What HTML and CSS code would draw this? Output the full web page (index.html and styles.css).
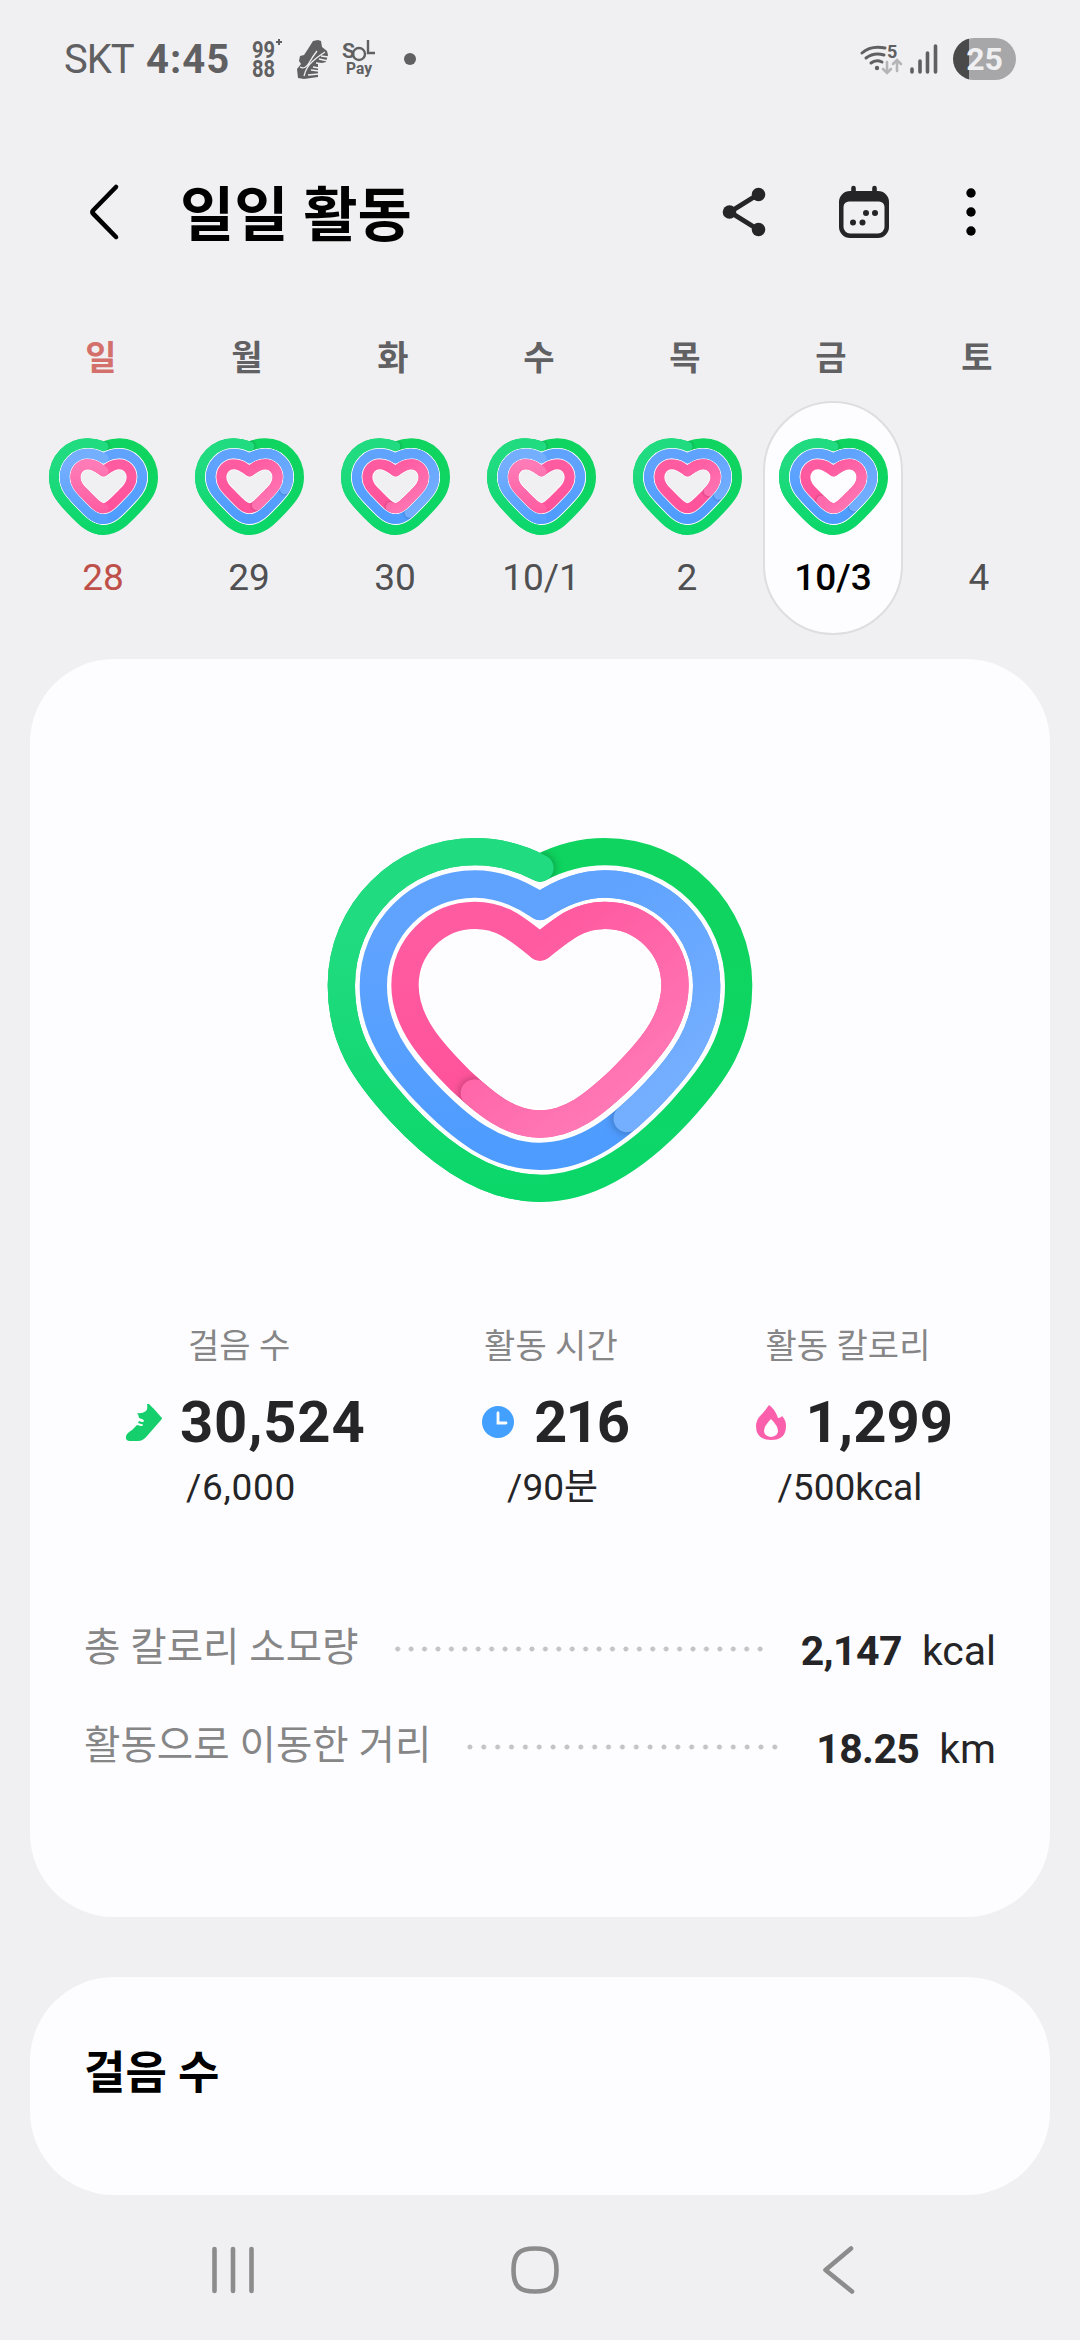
FILE: index.html
```html
<!DOCTYPE html>
<html lang="ko">
<head>
    <meta charset="UTF-8">
    <meta name="viewport" content="width=device-width, initial-scale=1.0">
    <title>일일 활동</title>
    <link rel="stylesheet" href="styles.css">
</head>
<body>
    <div class="status-bar">
        <span class="carrier">SKT</span>
        <span class="clock">4:45</span>
        <svg class="notif-9988" width="32" height="42" viewBox="0 0 32 42">
            <text x="0" y="20" textLength="23" lengthAdjust="spacingAndGlyphs">99</text>
            <text x="0" y="39" textLength="23" lengthAdjust="spacingAndGlyphs">88</text>
            <path d="M27 1v6M24 4h6" />
        </svg>
        <svg class="notif-shoe" width="32" height="40" viewBox="0 0 32 40">
            <path class="fill" d="M16 2l5-1 3 1 1 6 5 4 1 4-2 7-8 2v13l-14 2-6-1-1-9 4-5-2-3 1-5 4-1 4-6z" />
            <path class="cut" d="M7 37q2-9 9-15t12-9M3 28q5 3 9-4t8-12" />
            <path class="lines" d="M11 36l11-1M14 31l8 1M16 28l6 1M19 24l8 1M22 20l9 2M24 17l7 1" />
        </svg>
        <svg class="notif-sol" width="36" height="40" viewBox="0 0 36 40">
            <text class="sol" x="0" y="19">S</text>
            <circle cx="17" cy="15" r="6" />
            <path d="M26 1v13h7" />
            <text class="pay" x="4" y="35" textLength="26" lengthAdjust="spacingAndGlyphs">Pay</text>
        </svg>
        <span class="notif-more"></span>
        <div class="status-right">
            <svg class="wifi" width="42" height="32" viewBox="0 0 42 32">
                <path d="M2 10q9-8 23-5M6 15q8-6 18-3M11 20q5-4 11-1" />
                <circle cx="17" cy="25" r="2.2" />
                <text x="27" y="15">5</text>
                <path class="arrows" d="M27 19v10M23 26l4 4 4-4M37 28V18M33 21l4-4 4 4" />
            </svg>
            <svg class="signal" width="28" height="30" viewBox="0 0 28 30">
                <path d="M2 25v3M10 17v11M17.500 9v19M25.500 2v26" />
            </svg>
            <div class="battery">25</div>
        </div>
    </div>

    <header class="app-bar">
        <svg class="back" width="32" height="58" viewBox="0 0 32 58">
            <path d="M28 4L5.500 27q-2 2 0 4L28 54" />
        </svg>
        <h1 class="title">일일 활동</h1>
        <svg class="share" width="44" height="50" viewBox="0 0 44 50">
            <path d="M36 7.500L8 25l28 17.500" />
            <circle cx="36.500" cy="7.500" r="6.800" />
            <circle cx="7.500" cy="25" r="6.800" />
            <circle cx="36.500" cy="42.500" r="6.800" />
        </svg>
        <svg class="calendar" width="50" height="54" viewBox="0 0 50 54">
            <path class="pins" d="M14.500 3v7M35.500 3v7" />
            <path fill-rule="evenodd" d="M11 6h28a11 11 0 0 1 11 11v25a11 11 0 0 1-11 11H11A11 11 0 0 1 0 42V17A11 11 0 0 1 11 6zM10 16.500a5.500 5.500 0 0 0-5.500 5.500v20a6.500 6.500 0 0 0 6.500 6.500h28a6.500 6.500 0 0 0 6.500-6.500V22a5.500 5.500 0 0 0-5.500-5.500z" />
            <circle cx="27" cy="28" r="3" />
            <circle cx="36" cy="28" r="3" />
            <circle cx="14" cy="37.500" r="3" />
            <circle cx="23.500" cy="37.500" r="3" />
        </svg>
        <svg class="more" width="10" height="48" viewBox="0 0 10 48">
            <circle cx="5" cy="5" r="4.700" />
            <circle cx="5" cy="24" r="4.700" />
            <circle cx="5" cy="43" r="4.700" />
        </svg>
    </header>

    <div class="weekdays">
        <span class="sunday">일</span>
        <span>월</span>
        <span>화</span>
        <span>수</span>
        <span>목</span>
        <span>금</span>
        <span>토</span>
    </div>

    <!-- data-rings: where each ring ends (steps, time, calories), % of the last lap -->
    <div class="days">
        <div class="day sunday">
            <svg class="heart" data-size="small" data-rings="100,100,100"></svg>
            <span>28</span>
        </div>
        <div class="day">
            <svg class="heart" data-size="small" data-rings="100,29,45"></svg>
            <span>29</span>
        </div>
        <div class="day">
            <svg class="heart" data-size="small" data-rings="100,43,53"></svg>
            <span>30</span>
        </div>
        <div class="day">
            <svg class="heart" data-size="small" data-rings="100,100,100"></svg>
            <span>10/1</span>
        </div>
        <div class="day">
            <svg class="heart" data-size="small" data-rings="100,32,33"></svg>
            <span>2</span>
        </div>
        <div class="day selected">
            <svg class="heart" data-size="small" data-rings="100,39,59"></svg>
            <span>10/3</span>
        </div>
        <div class="day">
            <div class="heart"></div>
            <span>4</span>
        </div>
    </div>

    <main>
        <section class="card summary">
            <svg class="heart-big" data-size="big" data-rings="100,40,59.5"></svg>

            <div class="stats">
                <div class="stat steps">
                    <div class="stat-label">걸음 수</div>
                    <div class="stat-value">
                        <svg width="38" height="38" viewBox="0 0 38 38">
                            <path fill="#15cf6c" d="M24 1l5 5 7 8q2 1 0 3L22 33q-4 5-9 5H5q-5 0-4-5 1-3 6-6l5-5 4 1q2 0 2-1t-2-1l-3-1 1-2 3 1q2 0 2-1t-2-2l-3-1q0-3-2-5 5 1 9-2 2-2 1-7z" />
                        </svg>
                        <span>30,524</span>
                    </div>
                    <div class="stat-goal">/6,000</div>
                </div>
                <div class="stat time">
                    <div class="stat-label">활동 시간</div>
                    <div class="stat-value">
                        <svg width="32" height="32" viewBox="0 0 32 32">
                            <circle cx="16" cy="16" r="16" fill="#43a0ff" />
                            <path d="M16 7v10h8" fill="none" stroke="#fff" stroke-width="2.800" stroke-linecap="round" />
                        </svg>
                        <span>216</span>
                    </div>
                    <div class="stat-goal">/90분</div>
                </div>
                <div class="stat calories">
                    <div class="stat-label">활동 칼로리</div>
                    <div class="stat-value">
                        <svg width="30" height="35" viewBox="0 0 30 35">
                            <path fill="#fb5fab" d="M13 0q6 4 9 13 3 0 4-2 4 4 4 10 0 14-15 14T0 21Q0 15 5 10 9 6 13 0z" />
                            <path fill="#fdfdff" d="M15 14q7 7 7 12t-7 6q-7-1-7-6t7-12z" />
                        </svg>
                        <span>1,299</span>
                    </div>
                    <div class="stat-goal">/500kcal</div>
                </div>
            </div>

            <div class="totals">
                <div class="total">
                    <span class="total-label">총 칼로리 소모량</span>
                    <span class="leader"></span>
                    <span class="total-value">2,147</span>
                    <span class="unit">kcal</span>
                </div>
                <div class="total">
                    <span class="total-label">활동으로 이동한 거리</span>
                    <span class="leader"></span>
                    <span class="total-value">18.25</span>
                    <span class="unit">km</span>
                </div>
            </div>
        </section>

        <section class="card next">
            <h2>걸음 수</h2>
        </section>
    </main>

    <nav class="nav-bar">
        <svg width="44" height="48" viewBox="0 0 44 48">
            <path d="M3.500 3v42M22 3v42M40.500 3v42" />
        </svg>
        <svg class="home" width="50" height="50" viewBox="0 0 50 50">
            <path d="M25 3.500C41 3.500 46.500 9 46.500 25S41 46.500 25 46.500 3.500 41 3.500 25 9 3.500 25 3.500z" />
        </svg>
        <svg width="34" height="50" viewBox="0 0 34 50">
            <path d="M30 3.500L4.500 25 31 46.500" />
        </svg>
    </nav>

    <script>
        // Heart outlines, clockwise from the notch: steps, time, calories
        const shapes = {
            big: {
                viewBox: '60 60 1320 1140',
                stroke: 82,
                mid: 720,
                blur: 14,
                paths: [
                    'M720 174C785 140 850 125 915 125C1136 125 1316 305 1316 526C1316 690 1245 790 1140 905C1020 1035 880 1135 720 1135C560 1135 420 1035 300 905C195 790 124 690 124 526C124 305 304 125 525 125C590 125 655 140 720 174',
                    'M720 289C785 245 845 222 915 222C1084 222 1220 358 1220 527C1220 660 1150 755 1065 845C960 955 855 1039 720 1039C585 1039 480 955 375 845C290 755 220 660 220 527C220 358 356 222 525 222C595 222 655 245 720 289',
                    'M720 411C790 355 835 316 915 316C1031 316 1125 410 1125 526C1125 640 1040 730 960 810C880 885 810 942 720 942C630 942 560 885 480 810C400 730 315 640 315 526C315 410 409 316 525 316C605 316 650 355 720 411'
                ]
            },
            small: {
                viewBox: '45 342 351 315',
                stroke: 30,
                mid: 220.5,
                blur: 5,
                paths: [
                    'M220.500 379C238 372 252 369.500 268 369.500C325 369.500 369 416 369 472C369 510 350 534 324 562C288 600 262 630 220.500 630C179 630 153 600 117 562C91 534 72 510 72 472C72 416 116 369.500 173 369.500C189 369.500 203 372 220.500 379',
                    'M220.500 415C236 406 250 401.500 268 401.500C306 401.500 336.500 433 336.500 471C336.500 500 321 518 300 540C270 571 250 597 220.500 597C191 597 171 571 141 540C120 518 104.500 500 104.500 471C104.500 433 135 401.500 173 401.500C191 401.500 205 406 220.500 415',
                    'M220.500 454C236 443 247 432.500 268 432.500C289 432.500 305 450 305 471C305 492 293 504 278 520C252 547 237 565 220.500 565C204 565 189 547 163 520C148 504 136 492 136 471C136 450 152 432.500 173 432.500C194 432.500 205 443 220.500 454'
                ]
            }
        };

        // [notch, bottom, lap end]
        const colors = [
            ['#0fd45f', '#0bd769', '#20db80'],
            ['#5fa3ff', '#4c9bff', '#74aeff'],
            ['#ff5ba1', '#ff4f98', '#ff7ab6']
        ];

        function gradient(id, from, to, x1, y1, x2, y2) {
            return `<linearGradient id="${id}" gradientUnits="userSpaceOnUse" x1="${x1}" y1="${y1}" x2="${x2}" y2="${y2}">
                <stop offset="0" stop-color="${from}"/><stop offset="1" stop-color="${to}"/></linearGradient>`;
        }

        document.querySelectorAll('svg[data-rings]').forEach((svg, n) => {
            const shape = shapes[svg.dataset.size];
            const ends = svg.dataset.rings.split(',').map(Number);
            const [vx, vy, vw, vh] = shape.viewBox.split(' ').map(Number);
            const area = `x="${vx}" y="${vy}" width="${vw}" height="${vh}"`;
            let out = `<filter id="blur${n}" filterUnits="userSpaceOnUse" ${area}><feGaussianBlur stdDeviation="${shape.blur}"/></filter>`;

            shape.paths.forEach((d, i) => {
                const [notch, bottom, last] = colors[i];
                const end = ends[i];
                const id = `${n}-${i}`;
                const full = end === 100;
                const start = full ? 50 : 0;
                out += gradient('base' + id, notch, bottom, 0, vy + vh * 0.3, 0, vy + vh * 0.9);
                out += full
                    ? gradient('lap' + id, bottom, last, 0, vy + vh * 0.95, 0, vy + vh * 0.3)
                    : gradient('lap' + id, notch, last, shape.mid, vy + vh * 0.3, shape.mid + vw * 0.25, vy + vh * 0.7);
                out += `<mask id="ring${id}" maskUnits="userSpaceOnUse" ${area}><path d="${d}z" stroke="#fff" stroke-width="${shape.stroke}"/></mask>`;
                // thin white edge between the rings
                if (i > 0) {
                    out += `<path d="${d}z" stroke="#fff" stroke-width="${shape.stroke * 1.15}"/>`;
                }
                out += `<path d="${d}z" stroke="url(#base${id})" stroke-width="${shape.stroke}"/>`;
                out += `<g mask="url(#ring${id})"><path class="cap" d="${d}" pathLength="100" stroke="#000" stroke-opacity="0.35"
                    stroke-width="${shape.stroke}" stroke-dasharray="0.1 300" stroke-dashoffset="${0.1 - end}" filter="url(#blur${n})"/></g>`;
                out += `<path class="cap" d="${d}" pathLength="100" stroke="url(#lap${id})" stroke-width="${shape.stroke}"
                    stroke-dasharray="${end - start} 300" stroke-dashoffset="${-start}"/>`;
            });

            svg.setAttribute('viewBox', shape.viewBox);
            svg.innerHTML = out;
        });
    </script>
</body>
</html>
```
FILE: styles.css
```css
:root {
    --bg-color: #f0f0f2;
    --card-bg: #fdfdff;
    --text-color: #252527;
    --label-color: #868687;
    --status-color: #606062;
    --nav-color: #8c8c8d;
}

* {
    margin: 0;
    padding: 0;
    box-sizing: border-box;
    font-family: Roboto, "Noto Sans CJK KR", sans-serif;
}

body {
    width: 1080px;
    height: 2340px;
    display: flex;
    flex-direction: column;
    background: var(--bg-color);
    color: var(--text-color);
    overflow: hidden;
}

svg {
    display: block;
    flex: none;
    overflow: visible;
}

/* Status bar */
.status-bar {
    display: flex;
    align-items: center;
    height: 118px;
    padding: 0 64px;
    color: var(--status-color);
}

.carrier {
    width: 82px;
    font-size: 40px;
    letter-spacing: -1px;
}

.clock {
    width: 106px;
    font-size: 40px;
    font-weight: 700;
    letter-spacing: 1px;
}

.notif-9988 text {
    font-size: 24px;
    font-weight: 700;
    fill: var(--status-color);
}

.notif-9988 path {
    stroke: var(--status-color);
    stroke-width: 2;
}

.notif-shoe {
    margin-left: 13px;
}

.notif-shoe .fill {
    fill: var(--status-color);
}

.notif-shoe .cut,
.notif-shoe .lines {
    fill: none;
    stroke: var(--bg-color);
    stroke-width: 1.3;
}

.notif-sol {
    margin-left: 13px;
}

.notif-sol text {
    fill: var(--status-color);
    font-weight: 700;
}

.notif-sol .sol {
    font-size: 21px;
}

.notif-sol .pay {
    font-size: 16px;
}

.notif-sol circle,
.notif-sol path {
    fill: none;
    stroke: var(--status-color);
    stroke-width: 2.4;
}

.notif-more {
    width: 12px;
    height: 12px;
    margin-left: 26px;
    border-radius: 50%;
    background: var(--status-color);
}

.status-right {
    display: flex;
    align-items: center;
    margin-left: auto;
}

.wifi path {
    fill: none;
    stroke: var(--status-color);
    stroke-width: 3;
    stroke-linecap: round;
}

.wifi circle,
.wifi text {
    fill: var(--status-color);
}

.wifi text {
    font-size: 18px;
    font-weight: 700;
}

.wifi .arrows {
    stroke: #b5b5b7;
    stroke-width: 2.6;
}

.signal {
    margin-left: 8px;
}

.signal path {
    stroke: var(--status-color);
    stroke-width: 3.6;
    stroke-linecap: round;
}

.battery {
    width: 63px;
    height: 42px;
    margin-left: 15px;
    border-radius: 21px;
    background: linear-gradient(to right, #4a4a4b 16px, #a7a7a9 16px);
    color: #f0f0f2;
    font-size: 32px;
    font-weight: 700;
    line-height: 42px;
    text-align: center;
}

/* App bar */
.app-bar {
    display: flex;
    align-items: center;
    height: 188px;
    padding: 0 104px 0 88px;
}

.app-bar .back path {
    fill: none;
    stroke: #000;
    stroke-width: 4.6;
    stroke-linecap: round;
}

.title {
    flex: 1;
    margin-left: 60px;
    padding-top: 8px;
    color: #000;
    font-size: 59px;
    font-weight: 700;
    line-height: 80px;
}

.share,
.calendar {
    fill: var(--text-color);
}

.share path {
    fill: none;
    stroke: var(--text-color);
    stroke-width: 5;
}

.calendar {
    margin-left: 73px;
}

.calendar .pins {
    stroke: var(--text-color);
    stroke-width: 4.6;
    stroke-linecap: round;
}

.more {
    margin-left: 77px;
}

/* Week strip */
.weekdays,
.days {
    display: grid;
    grid-template-columns: repeat(7, 146px);
}

.weekdays {
    height: 95px;
    padding-left: 28px;
    color: #616163;
    font-size: 34px;
    font-weight: 700;
    line-height: 104px;
    text-align: center;
}

.weekdays .sunday {
    color: #d4706c;
}

.days {
    height: 234px;
    padding-left: 30px;
}

.day {
    display: flex;
    flex-direction: column;
    align-items: center;
    width: 140px;
    padding-top: 31px;
    margin: 0 3px;
    border: 2px solid transparent;
    border-radius: 70px;
    color: #505052;
    font-size: 37px;
    line-height: 44px;
}

.day.sunday {
    color: #bf4f49;
}

.day.selected {
    border-color: #dedee0;
    background: var(--card-bg);
    color: #000;
    font-weight: 500;
}

.heart {
    width: 117px;
    height: 105px;
    margin-bottom: 17px;
}

.heart path,
.heart-big path {
    fill: none;
    stroke-linejoin: round;
}

.heart .cap,
.heart-big .cap {
    stroke-linecap: round;
}

/* Cards */
main {
    display: flex;
    flex-direction: column;
    gap: 60px;
    padding: 24px 30px 0;
}

.card {
    border-radius: 84px;
    background: var(--card-bg);
}

.summary {
    display: flex;
    flex-direction: column;
    align-items: center;
    height: 1258px;
    padding: 171px 54px 0;
}

.heart-big {
    width: 440px;
    height: 380px;
}

.stats {
    display: flex;
    justify-content: space-between;
    align-self: stretch;
    margin-top: 111px;
    padding: 0 43px 0 41px;
}

.stat {
    display: flex;
    flex-direction: column;
}

.stat-label {
    color: var(--label-color);
    font-size: 34px;
    line-height: 50px;
}

.stat-value {
    display: flex;
    align-items: center;
    height: 76px;
    margin-top: 13px;
    font-size: 58px;
    font-weight: 700;
}

.stat-value span {
    margin-left: 20px;
}

.stat-goal {
    margin-top: 3px;
    font-size: 37px;
    line-height: 50px;
}

.steps .stat-label {
    margin-left: 63px;
}

.steps .stat-value span {
    margin-left: 17px;
    letter-spacing: 0.8px;
}

.steps .stat-goal {
    margin-left: 61px;
    letter-spacing: 0.7px;
}

.time {
    margin-left: -11px;
}

.time .stat-label {
    margin-left: 2px;
}

.time .stat-value span {
    letter-spacing: -2px;
}

.time .stat-goal {
    margin-left: 25px;
}

.calories .stat-label {
    margin-left: 10px;
}

.calories .stat-goal {
    margin-left: 22px;
}

.totals {
    align-self: stretch;
    margin-top: 87px;
}

.total {
    display: flex;
    align-items: center;
    height: 98px;
    font-size: 41px;
}

.total-label {
    color: var(--label-color);
    font-size: 39.6px;
    line-height: 60px;
    padding-bottom: 2px;
}

.leader {
    flex: 1;
    height: 6px;
    margin: 0 34px 0 32px;
    background: radial-gradient(circle, #c4c4c7 2.2px, transparent 2.8px) left center / 13.600px 6px round;
}

.total-value {
    padding-top: 3px;
    font-weight: 700;
    letter-spacing: -0.6px;
}

.unit {
    margin-left: 20px;
    padding-top: 3px;
}

.next {
    height: 218px;
    padding: 64px 54px;
}

.next h2 {
    color: #000;
    font-size: 45px;
    font-weight: 700;
    line-height: 66px;
}

/* Navigation bar */
.nav-bar {
    display: flex;
    flex: 1;
    align-items: center;
    justify-content: space-between;
    padding: 5px 225px 0 211px;
}

.nav-bar .home {
    margin-right: 6px;
}

.nav-bar path {
    fill: none;
    stroke: var(--nav-color);
    stroke-width: 4.600;
    stroke-linecap: round;
    stroke-linejoin: round;
}
```
